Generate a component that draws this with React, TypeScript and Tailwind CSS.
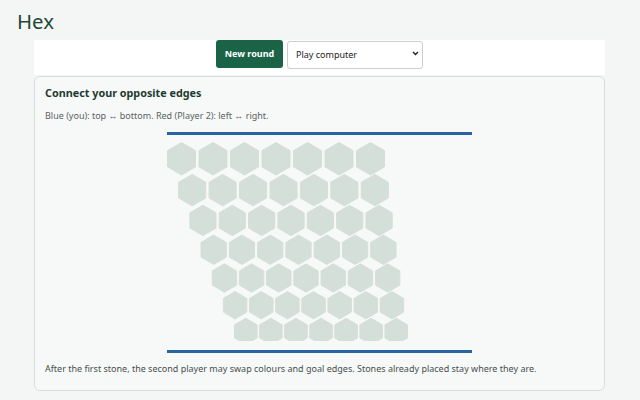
import React from "react";

const rows = (() => {
  const out: { x: number; y: number; w: number; h: number }[][] = [];
  let y = 0;
  for (let r = 0; r < 7; r++) {
    const x0 = 11.17 * r;
    const E = 218 - 7.33 * r;
    const w = 29 - 0.9 * r;
    const s = (E - w) / 6;
    const h = w * 1.155;
    const row = [];
    for (let i = 0; i < 7; i++) row.push({ x: x0 + i * s, y, w, h });
    out.push(row);
    y += h - 1.6;
  }
  return out;
})();

function hexPoints(x: number, y: number, w: number, h: number) {
  const pts = [
    [x + w / 2, y],
    [x + w, y + h / 4],
    [x + w, y + (3 * h) / 4],
    [x + w / 2, y + h],
    [x, y + (3 * h) / 4],
    [x, y + h / 4],
  ];
  return pts.map((p) => `${p[0].toFixed(2)},${p[1].toFixed(2)}`).join(" ");
}

export default function App() {
  return (
    <div
      className="min-h-screen bg-[#f4f6f6] pb-[10px]"
      style={{ fontFamily: '"Noto Sans", "Open Sans", sans-serif' }}
    >
      <h1 className="pl-[17px] pt-[9px] text-[20.4px] leading-[24px] font-normal text-[#1f4636]">
        Hex
      </h1>
      <div className="ml-[34px] mt-[7px] flex w-[571px] justify-center gap-[4px] bg-white pb-[7px]">
        <button className="h-[28px] w-[67px] rounded-[3px] bg-[#1b6347] text-[9px] font-bold text-white">
          New round
        </button>
        <div className="relative h-[28px] w-[136px]">
          <select className="h-full w-full appearance-none rounded-[3px] border border-[#c9cfcd] bg-white pl-[8px] text-[9px] text-[#222]">
            <option>Play computer</option>
            <option>Two players</option>
          </select>
          <svg
            className="pointer-events-none absolute right-[4px] top-[11px]"
            width="7"
            height="5"
            viewBox="0 0 7 5"
          >
            <path d="M1 1 L3.5 3.5 L6 1" fill="none" stroke="#222" strokeWidth="1.4" />
          </svg>
        </div>
      </div>
      <div className="ml-[34px] mt-[1px] w-[571px] rounded-[6px] border border-[#d6dddb] bg-[#f7f9f9] px-[10px] pb-[14px] pt-[8px]">
        <h2 className="text-[10.8px] font-bold leading-[16px] text-[#1d3b30]">
          Connect your opposite edges
        </h2>
        <p className="mt-[8px] text-[9px] leading-[14px] text-[#59625e]">
          Blue (you): top ↔ bottom. Red (Player 2): left ↔ right.
        </p>
        <div className="mx-auto mt-[9px] flex w-[305px] flex-col">
          <div className="h-[3px] bg-[#2964a6]" />
          <svg className="mt-[7px] block" width="305" height="199" viewBox="0 0 305 199">
            {rows.map((row, r) =>
              row.map((c, i) => (
                <polygon
                  key={`${r}-${i}`}
                  points={hexPoints(c.x + 0.5, c.y + 0.5, c.w - 1, c.h - 1)}
                  fill="#d5dfda"
                  stroke="#d5dfda"
                  strokeWidth="1"
                  strokeLinejoin="round"
                />
              ))
            )}
          </svg>
          <div className="mt-[9px] h-[3px] bg-[#2964a6]" />
        </div>
        <p className="mt-[9px] text-[9px] leading-[14px] text-[#48504c]">
          After the first stone, the second player may swap colours and goal edges. Stones already placed stay where they are.
        </p>
      </div>
    </div>
  );
}
